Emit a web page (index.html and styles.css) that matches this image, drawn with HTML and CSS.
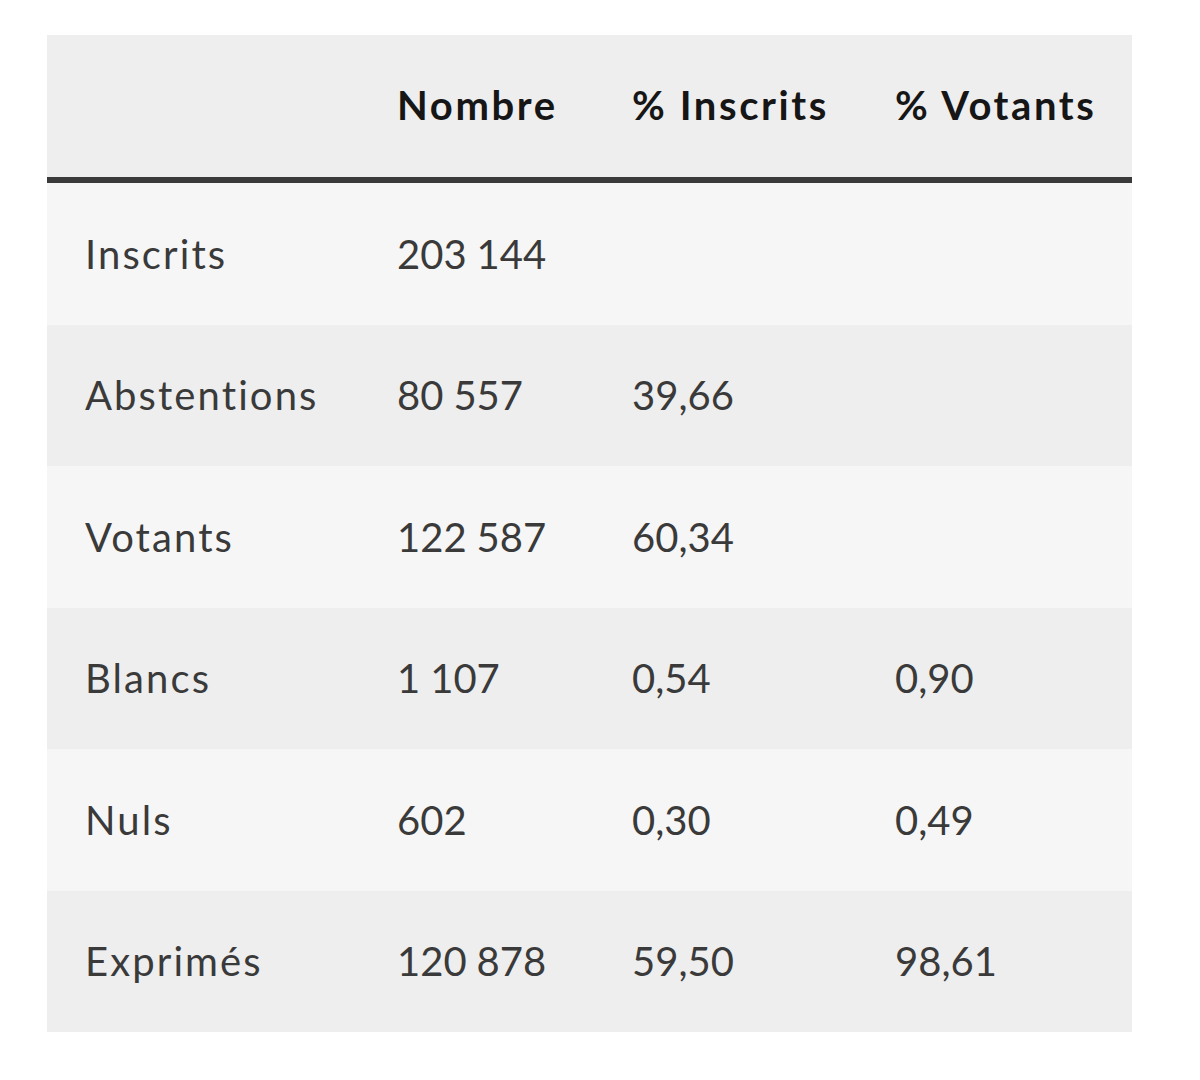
FILE: index.html
```html
<!DOCTYPE html>
<html lang="fr">
<head>
<meta charset="utf-8">
<title>Résultats</title>
<link rel="stylesheet" href="styles.css">
</head>
<body>
<div class="wrap">
<table class="results">
  <colgroup>
    <col class="c1"><col class="c2"><col class="c3"><col class="c4">
  </colgroup>
  <thead>
    <tr><th></th><th>Nombre</th><th>% Inscrits</th><th>% Votants</th></tr>
  </thead>
  <tbody>
    <tr><td class="label">Inscrits</td><td>203&#8239;144</td><td></td><td></td></tr>
    <tr><td class="label">Abstentions</td><td>80&#8239;557</td><td>39,66</td><td></td></tr>
    <tr><td class="label">Votants</td><td>122&#8239;587</td><td>60,34</td><td></td></tr>
    <tr><td class="label">Blancs</td><td>1&#8239;107</td><td>0,54</td><td>0,90</td></tr>
    <tr><td class="label">Nuls</td><td>602</td><td>0,30</td><td>0,49</td></tr>
    <tr><td class="label">Exprimés</td><td>120&#8239;878</td><td>59,50</td><td>98,61</td></tr>
  </tbody>
</table>
</div>
</body>
</html>
```
FILE: styles.css
```css
html, body {
  margin: 0;
  padding: 0;
  background: #ffffff;
}
.wrap {
  padding: 35px 68px 0 47px;
}
.results {
  border-collapse: collapse;
  width: 1085px;
  font-family: "Lato", "Liberation Sans", sans-serif;
  table-layout: fixed;
}
.c1 { width: 312px; }
.c2 { width: 235px; }
.c3 { width: 263px; }
.c4 { width: 275px; }
.results th,
.results td {
  text-align: left;
  padding: 0 0 0 38px;
  vertical-align: middle;
  white-space: nowrap;
}
.results thead th {
  background: #eeeeee;
  color: #161616;
  font-weight: 700;
  font-size: 40px;
  letter-spacing: 2.6px;
  height: 140px;
  padding-bottom: 2px;
  border-bottom: 6px solid #3a3a3a;
}
.results tbody td {
  color: #3a3a3a;
  font-size: 40px;
  font-weight: 400;
  height: 141.5px;
}
.results tbody td.label {
  letter-spacing: 2.1px;
}
.results tbody tr:nth-child(odd) td { background: #f6f6f6; }
.results tbody tr:nth-child(even) td { background: #eeeeee; }
```
